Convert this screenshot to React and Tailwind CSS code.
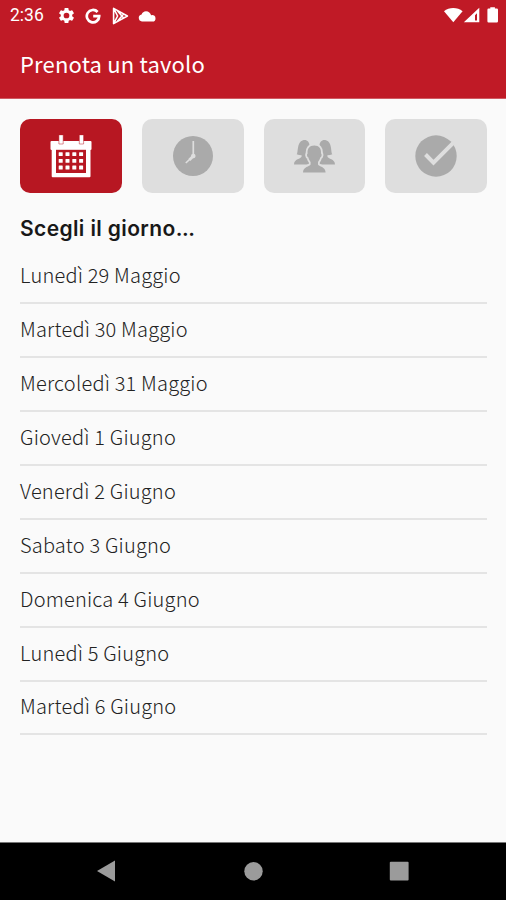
import React from "react";

const days = [
  "Lunedì 29 Maggio",
  "Martedì 30 Maggio",
  "Mercoledì 31 Maggio",
  "Giovedì 1 Giugno",
  "Venerdì 2 Giugno",
  "Sabato 3 Giugno",
  "Domenica 4 Giugno",
  "Lunedì 5 Giugno",
  "Martedì 6 Giugno",
];

function GearIcon() {
  return (
    <svg viewBox="0 0 24 24" className="h-[19px] w-[19px]" fill="#fff">
      <path d="M19.14 12.94c.04-.3.06-.61.06-.94s-.02-.64-.07-.94l2.03-1.58a.49.49 0 0 0 .12-.61l-1.92-3.32a.49.49 0 0 0-.59-.22l-2.39.96c-.5-.38-1.03-.7-1.62-.94l-.36-2.54a.48.48 0 0 0-.48-.41h-3.84c-.24 0-.43.17-.47.41l-.36 2.54c-.59.24-1.13.57-1.62.94l-2.39-.96a.48.48 0 0 0-.59.22L2.74 8.87c-.12.21-.08.47.12.61l2.03 1.58c-.05.3-.09.63-.09.94s.02.64.07.94l-2.03 1.58a.49.49 0 0 0-.12.61l1.92 3.32c.12.22.37.29.59.22l2.39-.96c.5.38 1.03.7 1.62.94l.36 2.54c.05.24.24.41.48.41h3.84c.24 0 .44-.17.47-.41l.36-2.54c.59-.24 1.13-.56 1.62-.94l2.39.96c.22.08.47 0 .59-.22l1.92-3.32a.48.48 0 0 0-.12-.61zM12 15.6a3.6 3.6 0 1 1 0-7.2 3.6 3.6 0 0 1 0 7.2z" />
    </svg>
  );
}

function GoogleIcon() {
  return (
    <svg viewBox="0 0 16 16" className="h-4 w-4" fill="none" stroke="#fff" strokeWidth="2.7">
      <path d="M12.6 4A6.2 6.2 0 1 0 14.2 8.2H8.2" />
    </svg>
  );
}

function PlayIcon() {
  return (
    <svg viewBox="0 0 17 18" className="h-[18px] w-[17px]" fill="none" stroke="#fff" strokeWidth="1.6" strokeLinejoin="round">
      <path d="M1.6 1.4 15.4 9 1.6 16.6zM1.8 1.6 5.6 9 1.8 16.4M5.4 3.8 11.6 11M5.4 14.2 11.6 7" />
    </svg>
  );
}

function CloudIcon() {
  return (
    <svg viewBox="0 0 18 12" className="h-3 w-[18px]" fill="#fff">
      <path d="M4 11.5a3.6 3.6 0 0 1-.4-7.1A5 5 0 0 1 8 1.2c2.6 0 4.6 1.7 5.1 4a3.2 3.2 0 0 1 4.4 3.2 3 3 0 0 1-3.1 3.1z" />
    </svg>
  );
}

function SystemIcons() {
  return (
    <svg viewBox="0 0 56 20" className="h-5 w-14" fill="#fff">
      <path d="M0 5.2C5 .8 13.5.8 18.6 5.2L9.3 16.3z" />
      <path fillRule="evenodd" d="M35.3 1.8V16.3H19.8zM33 7.2l-2 2.1V14.5h2z" />
      <path d="M46.3 2.6V1.2h4.6v1.4h1.9q1.2 0 1.2 1.2V15.2q0 1.2-1.2 1.2H44.6q-1.2 0-1.2-1.2V3.8q0-1.2 1.2-1.2z" />
    </svg>
  );
}

function CalendarIcon() {
  const cells = [];
  for (let row = 0; row < 3; row += 1) {
    for (let col = 0; col < 4; col += 1) {
      cells.push(<rect key={`${row}-${col}`} x={8.7 + col * 6.8} y={17.2 + row * 6.7} width="4" height="3.9" rx=".5" fill="#fff" />);
    }
  }
  return (
    <svg viewBox="0 0 42 43" className="h-[43px] w-[42px]">
      <path fill="#fff" d="M1.5 6H40.5q1 0 1 1v7q0 1-1 1V41.3q0 1-1 1H2.7q-1 0-1-1V15Q.5 15 .5 14V7q0-1 1-1z" />
      <rect x="6" y="14.8" width="30" height="23.2" fill="#b71722" />
      <path fill="#fff" stroke="#b71722" strokeOpacity=".55" strokeWidth=".9" d="M8.9-.2h4.3V9H8.9zM29.3-.2h4.3V9h-4.3z" />
      {cells}
    </svg>
  );
}

function ClockIcon() {
  return (
    <svg viewBox="0 0 40 40" className="h-10 w-10">
      <circle cx="20" cy="20" r="20" fill="#aaa" />
      <path d="M20.3 5V20L12.8 27" fill="none" stroke="#dedede" strokeWidth="1.7" />
      <path d="M20.3 20l-4 4" stroke="#dedede" strokeWidth="2.8" />
      <circle cx="20.3" cy="20" r="2.3" fill="#dedede" />
    </svg>
  );
}

function PeopleIcon() {
  const person = "M20.3 5.5c4.8 0 7.2 3.2 6.7 8 1 .4.8 3.5-.8 4.1-.5 2-1.3 3.300-2.200 4.300v2.500c.8 2.200 7.600 2 7.600 8.100H9c0-6.100 6.800-5.900 7.600-8.100v-2.500c-.9-1-1.700-2.300-2.200-4.300-1.600-.6-1.800-3.700-.8-4.100-.5-4.800 1.900-8 6.700-8z";
  return (
    <svg viewBox="0 0 41 33" className="h-[33px] w-[41px]" fill="#aaa">
      <path d="M9 .3c4.2-1 7 2 6.4 6.8.8.4.5 3.2-.6 3.6-.3 1.6-.9 2.6-1.6 3.4v2.4c.8 2.4 6 2 6 8H0c0-5.8 7-5.4 7.600-8v-1.200c-1.800 0-3.500-.3-4.900-1C4.500 12.500 2.500 2 9 .3z" />
      <path d="M32 .3c-4.200-1-7 2-6.400 6.800-.8.4-.5 3.200.6 3.600.3 1.600.9 2.600 1.600 3.400v2.400c-.8 2.400-6 2-6 8H41c0-5.800-7-5.400-7.600-8v-1.200c1.800 0 3.500-.3 4.900-1C36.500 12.500 38.500 2 32 .3z" />
      <path d={person} stroke="#dedede" strokeWidth="3.6" />
      <path d={person} />
    </svg>
  );
}

function CheckIcon() {
  return (
    <svg viewBox="0 0 42 42" className="h-[42px] w-[42px]">
      <circle cx="21" cy="21" r="20.7" fill="#aaa" />
      <path d="M10.5 19.5 18.5 27.7 38.5 7.7" fill="none" stroke="#dedede" strokeWidth="4" />
    </svg>
  );
}

function Step({ active, children }) {
  return (
    <div className={`flex h-[74px] flex-1 items-center justify-center rounded-[10px] ${active ? "bg-[#b71722]" : "bg-[#dedede]"}`}>
      {children}
    </div>
  );
}

export default function App() {
  return (
    <div className="flex h-[900px] w-[506px] flex-col overflow-hidden bg-[#fafafa] font-['Noto_Sans_CJK_SC',sans-serif]">
      <header className="h-[99px] shrink-0 border-b border-[#cf5a62] bg-[#c01a26] text-white">
        <div className="flex h-[31px] items-center pl-[10px] pr-[6px]">
          <span className="w-[47px] font-['Roboto',sans-serif] text-[17.5px] leading-none">2:36</span>
          <div className="flex items-center">
            <GearIcon />
            <div className="ml-[9px] flex"><GoogleIcon /></div>
            <div className="ml-[11px] flex"><PlayIcon /></div>
            <div className="ml-[9px] flex"><CloudIcon /></div>
          </div>
          <div className="ml-auto flex"><SystemIcons /></div>
        </div>
        <h1 className="pl-5 pt-[15px] text-[22px] leading-[34px] tracking-[0.18px]">Prenota un tavolo</h1>
      </header>

      <main className="flex flex-1 flex-col pl-5 pr-[19px] pt-5">
        <nav className="flex gap-5">
          <Step active><CalendarIcon /></Step>
          <Step><ClockIcon /></Step>
          <Step><PeopleIcon /></Step>
          <Step><CheckIcon /></Step>
        </nav>
        <h2 className="mt-[20px] h-8 font-['Inter',sans-serif] text-[21px] font-semibold leading-8 tracking-[0.38px] text-[#181818]">Scegli il giorno<span className="tracking-[-0.4px]">...</span></h2>
        <ul className="mt-[5px]">
          {days.map((label) => (
            <li key={label} className="flex h-[53.94px] items-center border-b-2 border-[#e4e4e4] pb-[2px] text-[20px] font-light leading-none tracking-[0.2px] text-[#222]">
              <span>{label}</span>
            </li>
          ))}
        </ul>
      </main>

      <footer className="h-[58px] shrink-0 border-t border-[#777] bg-black">
        <svg viewBox="0 0 506 57" className="h-[57px] w-full" fill="#9b9b9b">
          <path d="M97 28 115 17.500v21z" />
          <circle cx="253.500" cy="28.300" r="9.200" />
          <rect x="389.800" y="18.800" width="18.800" height="18.800" rx="1" />
        </svg>
      </footer>
    </div>
  );
}
